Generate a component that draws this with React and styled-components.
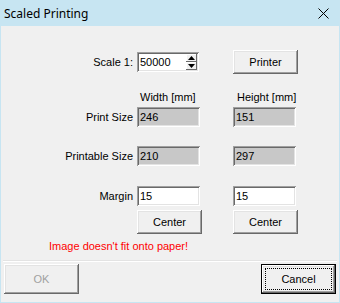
import React from "react";
import styled, { createGlobalStyle } from "styled-components";

const GlobalStyle = createGlobalStyle`
  html, body { margin: 0; padding: 0; }
  body { width: 340px; height: 303px; overflow: hidden; background: #c7e5f2; }
`;

const Window = styled.div`
  width: 340px;
  height: 303px;
  box-sizing: border-box;
  display: flex;
  flex-direction: column;
  background: #c7e5f2;
  padding: 0 1px 1px 1px;
  font-family: "Liberation Sans", Arial, sans-serif;
  font-size: 11px;
  color: #000;
`;

const TitleBar = styled.div`
  height: 26px;
  flex: none;
  display: flex;
  align-items: center;
  justify-content: space-between;
  padding: 0 10px 0 3px;
  font-family: "Noto Sans", "Open Sans", sans-serif;
  font-size: 12px;
`;

const Body = styled.div`
  flex: 1;
  background: #f0f0f0;
  display: flex;
  flex-direction: column;
`;

const Form = styled.div`
  display: grid;
  grid-template-columns: 136px 96px 65px;
  grid-template-rows: 24px 33px 20px 39px 40px 28px;
  padding-top: 24px;
`;

const Label = styled.div`
  align-self: ${({ $center }) => ($center ? "center" : "end")};
  line-height: 20px;
  text-align: right;
  padding-right: 4px;
`;

const Header = styled.div`
  align-self: end;
  line-height: 13px;
  margin-bottom: 3px;
  padding-left: ${({ $indent }) => $indent || 3}px;
`;

const Field = styled.div`
  align-self: ${({ $center }) => ($center ? "center" : "end")};
  position: relative;
  box-sizing: border-box;
  width: ${({ $w }) => $w || 63}px;
  height: 20px;
  line-height: 16px;
  padding: 2px 3px;
  background: ${({ $readOnly }) => ($readOnly ? "#c8c8c8" : "#fff")};
  box-shadow: inset 1px 1px #a0a0a0, inset -1px -1px #fff,
    inset 2px 2px #696969, inset -2px -2px #e3e3e3;
`;

const Spin = styled.div`
  position: absolute;
  right: 2px;
  top: 2px;
  bottom: 2px;
  width: 11px;
  display: flex;
  flex-direction: column;
`;

const SpinHalf = styled.div`
  flex: 1;
  display: flex;
  align-items: center;
  justify-content: center;
  background: #f0f0f0;
  box-shadow: inset -1px -1px #696969, inset 1px 1px #fff;
`;

const Button = styled.div`
  align-self: end;
  box-sizing: border-box;
  width: ${({ $w }) => $w || 65}px;
  height: ${({ $h }) => $h || 24}px;
  display: flex;
  align-items: center;
  justify-content: center;
  background: #f0f0f0;
  color: ${({ $disabled }) => ($disabled ? "#a0a0a0" : "#000")};
  box-shadow: inset -1px -1px #696969, inset 1px 1px #fff,
    inset -2px -2px #a0a0a0, inset 2px 2px #e3e3e3;
`;

const DefaultButton = styled(Button)`
  position: relative;
  border: 1px solid #000;
  &::after {
    content: "";
    position: absolute;
    inset: 3px;
    border: 1px dotted #000;
  }
`;

const Warning = styled.div`
  color: #ff0000;
  line-height: 13px;
  margin-top: 6px;
  padding-left: 48px;
`;

const Separator = styled.div`
  margin: 7px 2px 0;
  height: 1px;
  background: #fff;
  border-top: 1px solid #e3e3e3;
`;

const Actions = styled.div`
  display: flex;
  justify-content: space-between;
  padding: 2px 3px 0 3px;
`;

const Arrow = ({ up }) => (
  <svg width="7" height="4" viewBox="0 0 7 4">
    <path d={up ? "M0 4 L3.5 0 L7 4 Z" : "M0 0 L3.5 4 L7 0 Z"} fill="#000" />
  </svg>
);

const CloseIcon = () => (
  <svg width="11" height="11" viewBox="0 0 11 11">
    <path d="M0.5 0.5 L10.5 10.5 M10.5 0.5 L0.5 10.5" stroke="#000" strokeWidth="1" />
  </svg>
);

export default function App() {
  return (
    <Window>
      <GlobalStyle />
      <TitleBar>
        <span>Scaled Printing</span>
        <CloseIcon />
      </TitleBar>
      <Body>
        <Form>
          <Label $center>Scale 1:</Label>
          <Field $center $w={62}>
            50000
            <Spin>
              <SpinHalf><Arrow up /></SpinHalf>
              <SpinHalf><Arrow /></SpinHalf>
            </Spin>
          </Field>
          <Button>Printer</Button>

          <div />
          <Header>Width [mm]</Header>
          <Header $indent={4}>Height [mm]</Header>

          <Label>Print Size</Label>
          <Field $readOnly>246</Field>
          <Field $readOnly>151</Field>

          <Label>Printable Size</Label>
          <Field $readOnly>210</Field>
          <Field $readOnly>297</Field>

          <Label>Margin</Label>
          <Field>15</Field>
          <Field>15</Field>

          <div />
          <Button>Center</Button>
          <Button>Center</Button>
        </Form>
        <Warning>Image doesn't fit onto paper!</Warning>
        <Separator />
        <Actions>
          <Button $w={75} $h={30} $disabled>OK</Button>
          <DefaultButton $w={75} $h={30}>Cancel</DefaultButton>
        </Actions>
      </Body>
    </Window>
  );
}
